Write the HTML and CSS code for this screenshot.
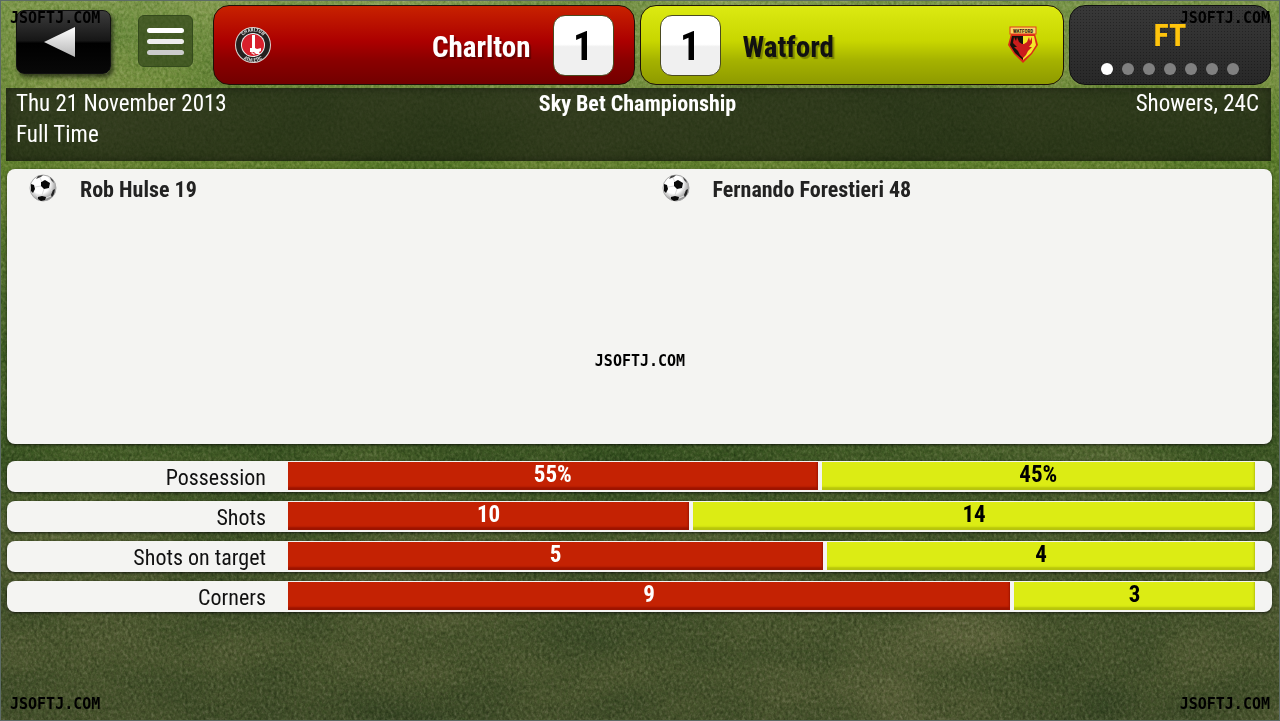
FILE: index.html
```html
<!DOCTYPE html>
<html lang="en">
    <head>
        <meta charset="UTF-8" />
        <meta name="viewport" content="width=device-width, initial-scale=1.0" />
        <title>Charlton 1 - 1 Watford</title>
        <link rel="stylesheet" href="styles.css">
    </head>
    <body>
        <!-- grass -->
        <svg class="grass" aria-hidden="true">
            <filter id="blades" x="0" y="0" width="100%" height="100%" color-interpolation-filters="sRGB">
                <feTurbulence type="fractalNoise" baseFrequency="0.35 0.28" numOctaves="3" seed="8" />
                <feColorMatrix values="1 0.8 0 0 -0.4  0.8 0.8 0.2 0 -0.4  1 0.8 0 0 -0.4  0 0 0 0 1" />
            </filter>
            <filter id="patches" x="0" y="0" width="100%" height="100%" color-interpolation-filters="sRGB">
                <feTurbulence type="fractalNoise" baseFrequency="0.006 0.012" numOctaves="3" seed="3" />
                <feColorMatrix values="1.4 0 0 0 -0.2  1 0 0 0 0  1 0 0 0 0  0 0 0 0 1" />
            </filter>
            <rect class="patches" width="100%" height="100%" filter="url(#patches)" />
            <rect class="blades" width="100%" height="100%" filter="url(#blades)" />
        </svg>

        <div class="match">
            <header class="top">
                <button class="back" type="button" aria-label="Back">
                    <svg width="32" height="32" viewBox="0 0 32 32">
                        <defs>
                            <linearGradient id="arrow" x1="0" y1="0" x2="0" y2="1">
                                <stop offset="0" stop-color="#fff" />
                                <stop offset="1" stop-color="#b5b5b5" />
                            </linearGradient>
                        </defs>
                        <path d="M0 16 L31 1 V31 Z" fill="url(#arrow)" />
                    </svg>
                </button>
                <button class="menu" type="button" aria-label="Menu">
                    <span></span>
                    <span></span>
                    <span></span>
                </button>

                <div class="team home">
                    <svg class="crest" width="38" height="38" viewBox="0 0 38 38" aria-hidden="true">
                        <defs>
                            <path id="ring-top" d="M5.4 19 A13.6 13.6 0 0 1 32.6 19" />
                            <path id="ring-bottom" d="M2.2 19 A16.8 16.8 0 0 0 35.8 19" />
                        </defs>
                        <circle cx="19" cy="19" r="18" fill="#d8d3d0" />
                        <circle cx="19" cy="19" r="17" fill="#24201f" />
                        <circle cx="19" cy="19" r="12" fill="#eee" />
                        <circle cx="19" cy="19" r="11" fill="#d8202c" />
                        <path d="M18 9 h3 v13 h-3 z" fill="#fff" />
                        <path d="M16 22 h5 l2 1 4 -1 v3 l-2 1 1 2 h-4 l-2 -2 h-4 z" fill="#fff" />
                        <path d="M18 26 l3 2 -1 1 -3 -2 z" fill="#f3dcdc" />
                        <text><textPath href="#ring-top" startOffset="50%">CHARLTON</textPath></text>
                        <text><textPath href="#ring-bottom" startOffset="50%">ATHLETIC</textPath></text>
                    </svg>
                    <h2>Charlton</h2>
                    <strong class="score">1</strong>
                </div>

                <div class="team away">
                    <strong class="score">1</strong>
                    <h2>Watford</h2>
                    <svg class="crest" width="32" height="38" viewBox="0 0 32 38" aria-hidden="true">
                        <path d="M4 8 H28 L31 19 L25 28 L16 37 L7 28 L1 19 Z" fill="#dc2a18" />
                        <path d="M5 10 H16 V34 L8 27 L3 19 Z" fill="#17110b" />
                        <path d="M16 10 H27 L29 19 L24 27 L16 34 Z" fill="#f5e62a" />
                        <path d="M7 11 l2 4 1 -4 2 5 3 2 h2 l3 -2 2 -5 1 4 2 -4 v6 l-3 4 h3 l-4 4 -2 4 -3 3 -3 -3 -2 -4 -4 -4 h3 l-4 -4 z" fill="#cb1c1c" />
                        <rect x="3" y="1" width="26" height="7" fill="#f8d869" stroke="#e33b1c" stroke-width="1" />
                        <text x="16" y="7">WATFORD</text>
                    </svg>
                </div>

                <div class="status">
                    <strong>FT</strong>
                    <div class="dots">
                        <span class="on"></span>
                        <span></span>
                        <span></span>
                        <span></span>
                        <span></span>
                        <span></span>
                        <span></span>
                    </div>
                </div>
            </header>

            <section class="info">
                <p>Thu 21 November 2013<br />Full Time</p>
                <h1>Sky Bet Championship</h1>
                <p class="weather">Showers, 24C</p>
            </section>

            <section class="goals">
                <div class="goal">
                    <svg class="ball" width="28" height="28" viewBox="0 0 28 28" aria-hidden="true">
                        <defs>
                            <radialGradient id="leather" cx="0.4" cy="0.35" r="0.65">
                                <stop offset="0.55" stop-color="#fff" />
                                <stop offset="1" stop-color="#8c8c8c" />
                            </radialGradient>
                        </defs>
                        <g id="football">
                            <circle cx="14" cy="14" r="13" fill="url(#leather)" stroke="#aaa" />
                            <path d="M12 8 l4 -2 5 3 -1 5 -5 1 -3 -3 z" fill="#0a0a0a" />
                            <path d="M2 10 l3 1 1 4 -2 4 -2 -2 z" fill="#0a0a0a" />
                            <path d="M9 23 l4 -1 4 1 -1 3 -4 1 -3 -2 z" fill="#0a0a0a" />
                            <path d="M26 15 l-2 1 -2 5 1 2 2 -3 z" fill="#222" />
                            <path d="M9 2 l5 -1 -2 2 -5 2 z M21 3 l3 3 1 3 -3 -3 z" fill="#444" />
                            <path d="M6 13 l6 -1 M15 15 l-2 6 M20 14 l3 3 M5 19 l4 4 M17 24 l5 -2 M13 8 l-2 -4" stroke="#ddd" fill="none" />
                        </g>
                    </svg>
                    <span>Rob Hulse 19</span>
                </div>
                <div class="goal">
                    <svg class="ball" width="28" height="28" viewBox="0 0 28 28" aria-hidden="true">
                        <use href="#football" />
                    </svg>
                    <span>Fernando Forestieri 48</span>
                </div>
            </section>

            <section class="stats">
                <div class="stat">
                    <span class="label">Possession</span>
                    <div class="bar">
                        <span class="red" style="flex-grow: 55">55%</span>
                        <span class="yellow" style="flex-grow: 45">45%</span>
                    </div>
                </div>
                <div class="stat">
                    <span class="label">Shots</span>
                    <div class="bar">
                        <span class="red" style="flex-grow: 10">10</span>
                        <span class="yellow" style="flex-grow: 14">14</span>
                    </div>
                </div>
                <div class="stat">
                    <span class="label">Shots on target</span>
                    <div class="bar">
                        <span class="red" style="flex-grow: 5">5</span>
                        <span class="yellow" style="flex-grow: 4">4</span>
                    </div>
                </div>
                <div class="stat">
                    <span class="label">Corners</span>
                    <div class="bar">
                        <span class="red" style="flex-grow: 9">9</span>
                        <span class="yellow" style="flex-grow: 3">3</span>
                    </div>
                </div>
            </section>
        </div>

        <!-- watermarks -->
        <div class="marks">
            <span>JSOFTJ.COM</span>
            <span>JSOFTJ.COM</span>
            <span class="middle">JSOFTJ.COM</span>
            <span>JSOFTJ.COM</span>
            <span>JSOFTJ.COM</span>
        </div>
    </body>
</html>
```

FILE: styles.css
```css
* {
    box-sizing: border-box;
}
body {
    margin: 0;
    position: relative;
    background: linear-gradient(#7c964a 0, #718c3d 80px, #5f7d2c 165px, #49662a 300px, #425a26 450px, #47542c 600px, #47522c 100%);
    color: #fff;
    font-family: "Roboto Condensed", "Liberation Sans Narrow", "DejaVu Sans Condensed", sans-serif;
    font-size: 22px;
    line-height: 31px;
}
h1,
h2,
p {
    margin: 0;
    font-size: inherit;
}
button {
    padding: 0;
}

/* grass */
.grass {
    position: absolute;
    top: 0;
    left: 0;
    width: 100%;
    height: 100%;
}
.patches {
    mix-blend-mode: soft-light;
    opacity: 0.3;
}
.blades {
    mix-blend-mode: soft-light;
    opacity: 0.4;
}

.match {
    position: relative;
    min-height: 100vh;
    padding: 4px 7px 108px 5px;
    border: 1px solid #5c6b66;
    display: flex;
    flex-direction: column;
}

/* top bar */
.top {
    display: flex;
    height: 80px;
    margin: 0 1px 3px 10px;
}
.back {
    width: 95px;
    height: 64px;
    margin: 5px 27px 0 0;
    padding-right: 8px;
    border: 1px solid #111;
    border-radius: 8px;
    background: linear-gradient(#3c3c3c, #161616 48%, #000 52%, #080808);
    box-shadow: 2px 3px 4px rgba(0, 0, 0, 0.6);
}
.back svg {
    display: block;
    margin: auto;
}
.menu {
    width: 55px;
    height: 52px;
    margin: 10px 20px 0 0;
    padding: 0 8px;
    display: flex;
    flex-direction: column;
    justify-content: center;
    gap: 6px;
    border: 1px solid #344a1c;
    border-radius: 6px;
    background: rgba(50, 70, 25, 0.7);
}
.menu span {
    height: 5px;
    border-radius: 3px;
    background: #fff;
}
.menu span:nth-child(2) {
    background: #eee;
}
.menu span:nth-child(3) {
    background: #ccc;
}
.team {
    flex: 1;
    display: flex;
    align-items: center;
    padding: 0 20px;
    margin-right: 5px;
    border: 1px solid #1c1208;
    border-radius: 16px;
    font-size: 29px;
}
.team h2 {
    flex: 1;
    padding: 5px 22px 0;
    text-shadow: 2px 2px 1px rgba(0, 0, 0, 0.3);
}
.home {
    background: linear-gradient(#c82200, #ac0000 45%, #8a0000 70%, #720000);
}
.home h2 {
    text-align: right;
}
.away {
    padding: 0 24px 0 19px;
    background: linear-gradient(#dcea12, #c8d600 45%, #a5b200 70%, #8e9a00);
    color: #111;
}
.score {
    width: 61px;
    height: 61px;
    border: 1px solid #4a4a20;
    border-radius: 12px;
    background: linear-gradient(#fff 48%, #f0f0f0 52%);
    color: #000;
    font-size: 40px;
    line-height: 62px;
    text-align: center;
}
.crest text {
    fill: #ddd;
    font-size: 5px;
    font-weight: bold;
    text-anchor: middle;
}
.away .crest text {
    fill: #30200c;
}
.status {
    width: 202px;
    padding-top: 14px;
    border: 1px solid #101010;
    border-radius: 16px;
    background: radial-gradient(rgba(0, 0, 0, 0.3) 1px, transparent 1px) 0 0 / 3px 3px, linear-gradient(#383838, #282828);
    color: #ffc40c;
    font-size: 32px;
    text-align: center;
}
.status strong {
    display: block;
}
.dots {
    display: flex;
    justify-content: center;
    gap: 9px;
    margin-top: 12px;
}
.dots span {
    width: 12px;
    height: 12px;
    border-radius: 50%;
    background: #808080;
}
.dots .on {
    background: #fff;
}

/* date, competition, weather */
.info {
    display: grid;
    grid-template-columns: 1fr auto 1fr;
    height: 73px;
    margin-right: 1px;
    padding: 0 12px 0 10px;
    background: rgba(22, 26, 16, 0.7);
    box-shadow: inset 0 0 8px rgba(0, 0, 0, 0.4);
}
.info p {
    font-size: 23px;
}
.weather {
    text-align: right;
}

/* scorers */
.goals {
    flex: 1;
    display: grid;
    grid-template-columns: 1fr 1fr;
    margin: 8px 0 17px 1px;
    border-radius: 8px;
    background: #f4f4f2;
    box-shadow: 0 1px 3px rgba(0, 0, 0, 0.7);
    color: #222;
    font-weight: bold;
}
.goal {
    display: flex;
    align-items: flex-start;
    padding: 5px 22px;
}
.goal span {
    margin-left: 23px;
}

/* stats */
.stats {
    display: grid;
    gap: 9px;
    margin-left: 1px;
}
.stat {
    display: flex;
    height: 31px;
    padding: 1px 17px 2px 0;
    border-radius: 8px;
    background: #f4f4f2;
    box-shadow: 0 1px 3px rgba(0, 0, 0, 0.7);
    color: #111;
}
.label {
    width: 281px;
    padding-right: 22px;
    text-align: right;
}
.bar {
    flex: 1;
    display: flex;
    gap: 4px;
    font-size: 23px;
    line-height: 26px;
    font-weight: bold;
    text-align: center;
}
.bar span {
    flex-basis: 0;
}
.red {
    background: #c42203;
    box-shadow: inset -1px -3px 2px #9c1400;
    color: #fff;
}
.yellow {
    background: #dcec14;
    box-shadow: inset -1px -3px 2px #b6c40c;
    color: #000;
}

/* watermarks */
.marks {
    position: absolute;
    top: 0;
    left: 0;
    width: 100%;
    height: 100%;
    padding: 9px 10px 8px;
    display: grid;
    grid-template-columns: 1fr 1fr;
    align-content: space-between;
    color: #000;
    font-family: "DejaVu Sans Mono", monospace;
    font-size: 15px;
    font-weight: bold;
    line-height: 18px;
    pointer-events: none;
}
.marks span:nth-child(2),
.marks span:last-child {
    text-align: right;
}
.marks .middle {
    grid-column: 1 / 3;
    text-align: center;
}
```
